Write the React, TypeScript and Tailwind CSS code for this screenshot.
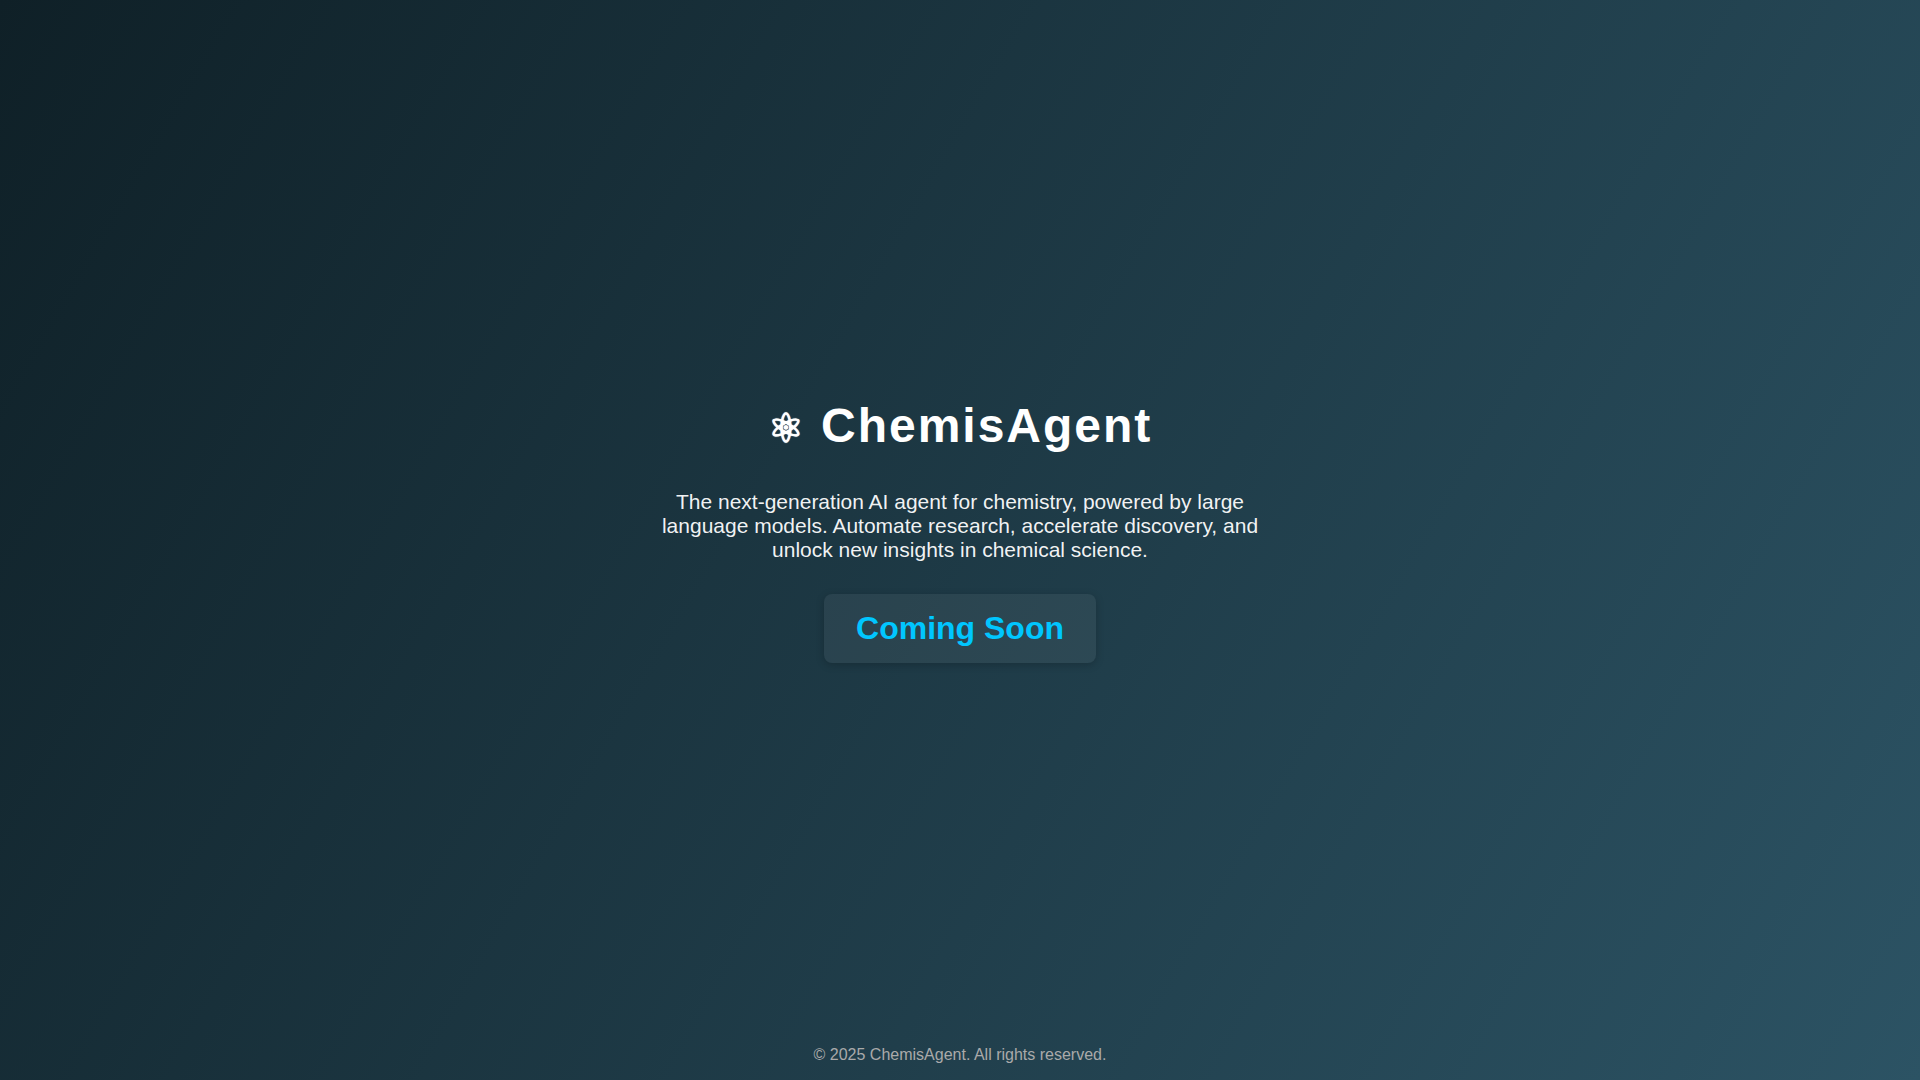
export default function App() {
  return (
    <div className="flex min-h-screen flex-col items-center bg-[linear-gradient(120deg,#0f2027,#2c5364)] font-['Liberation_Sans',Arial,sans-serif] text-white">
      <main className="flex flex-1 flex-col items-center justify-center pt-[18px] text-center">
        <h1 className="mb-10 text-5xl font-bold tracking-[2px]">
          <span className="text-[40px] leading-none [text-shadow:0_0_1px_white]">⚛</span> ChemisAgent
        </h1>
        <p className="mb-8 max-w-[600px] text-[21px] leading-6 text-white/95">
          The next-generation AI agent for chemistry, powered by large language models. Automate research, accelerate discovery, and unlock new insights in chemical science.
        </p>
        <div className="rounded-lg bg-white/6 px-8 py-4 text-[32px] leading-[37px] font-bold text-[#00c6ff] shadow-[0_2px_8px_rgba(0,0,0,0.2)]">Coming Soon</div>
      </main>
      <footer className="pb-4 text-base leading-[18px] text-[#aaaaaa]">© 2025 ChemisAgent. All rights reserved.</footer>
    </div>
  );
}
